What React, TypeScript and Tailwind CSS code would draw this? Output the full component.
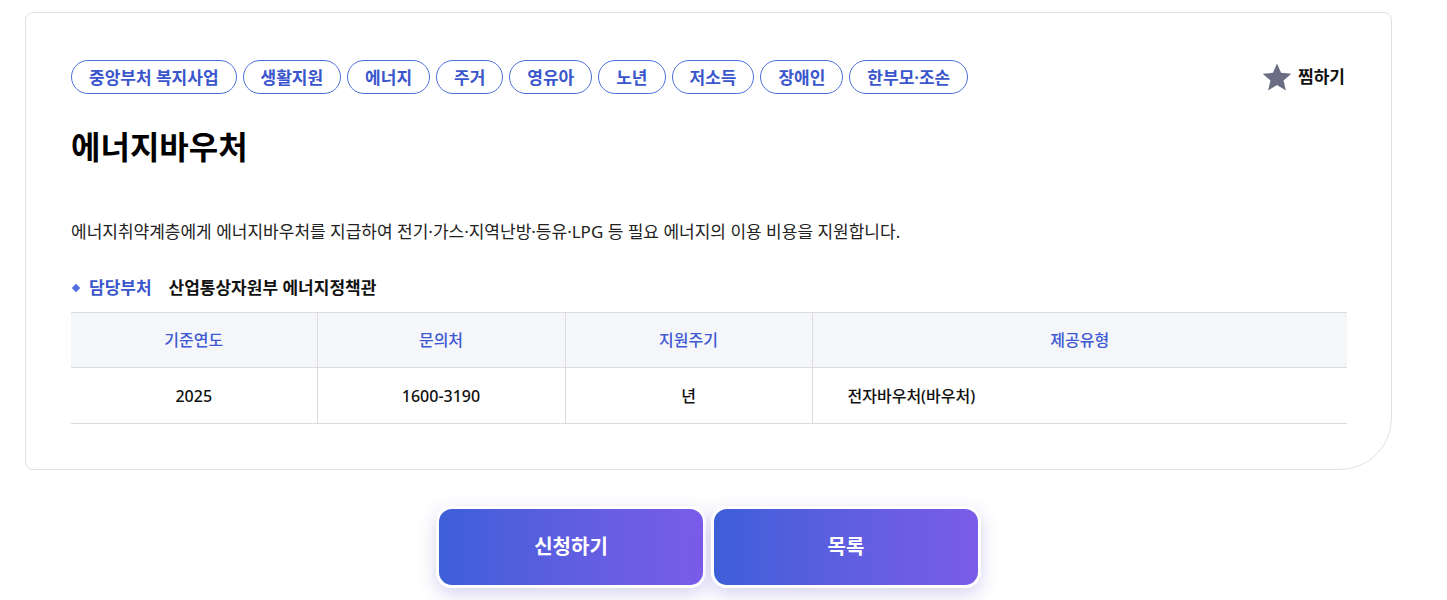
import React from 'react';

const tags = ['중앙부처 복지사업', '생활지원', '에너지', '주거', '영유아', '노년', '저소득', '장애인', '한부모·조손'];

const StarIcon = () => (
  <svg viewBox="0 0 24 24" className="w-[32px] h-[32px]" fill="#6b6d85">
    <path d="M12 1.8l3.05 7.1 7.7.62-5.85 5.05 1.8 7.53L12 18.05 5.3 22.1l1.8-7.53L1.25 9.52l7.7-.62z" />
  </svg>
);

export default function App() {
  return (
    <div
      className="w-full min-h-[600px] bg-white pt-[12px] pl-[25px] pr-[55px] text-[#111]"
      style={{ fontFamily: '"Noto Sans", "Noto Sans CJK KR", sans-serif' }}
    >
      {/* card */}
      <div className="border border-[#e1e1e1] rounded-[8px] rounded-br-[52px] pt-[47px] pl-[45px] pr-[44px] pb-[45px]">
        <div className="flex items-center justify-between">
          <div className="flex items-center gap-[6px]">
            {tags.map((t) => (
              <span
                key={t}
                className="h-[34px] px-[17px] flex items-center rounded-full border border-[#4f6fdc] text-[#3a56cc] text-[17px] font-semibold leading-none"
              >
                {t}
              </span>
            ))}
          </div>
          <button className="flex items-center gap-[5px] text-[17px] font-bold mr-[2px]">
            <StarIcon />
            찜하기
          </button>
        </div>

        <h1 className="mt-[31px] text-[32px] font-bold leading-[44px] text-black">에너지바우처</h1>

        <p className="mt-[50px] text-[17px] leading-[26px] text-[#222]">
          에너지취약계층에게 에너지바우처를 지급하여 전기·가스·지역난방·등유·LPG 등 필요 에너지의 이용 비용을 지원합니다.
        </p>

        <div className="mt-[30px] flex items-center text-[17px] font-bold leading-[26px]">
          <span className="w-[6px] h-[6px] bg-[#4f6fdc] rotate-45 ml-[2px] mr-[10px]" />
          <span className="text-[#3a56cc]">담당부처</span>
          <span className="ml-[17px] text-[#111]">산업통상자원부 에너지정책관</span>
        </div>

        <table className="mt-[11px] w-full border-collapse table-fixed text-[16px]">
          <thead>
            <tr className="bg-[#f5f6fa] h-[55px] border-y border-[#dcdcdc]">
              <th className="w-[246px] font-medium text-[#3f59d4] border-r border-[#dcdcdc]">기준연도</th>
              <th className="w-[248px] font-medium text-[#3f59d4] border-r border-[#dcdcdc]">문의처</th>
              <th className="w-[247px] font-medium text-[#3f59d4] border-r border-[#dcdcdc]">지원주기</th>
              <th className="font-medium text-[#3f59d4]">제공유형</th>
            </tr>
          </thead>
          <tbody>
            <tr className="h-[56px] border-b border-[#dcdcdc]">
              <td className="text-center font-medium border-r border-[#dcdcdc]">2025</td>
              <td className="text-center font-medium border-r border-[#dcdcdc]">1600-3190</td>
              <td className="text-center font-medium border-r border-[#dcdcdc]">년</td>
              <td className="pl-[35px] font-medium">전자바우처(바우처)</td>
            </tr>
          </tbody>
        </table>
      </div>

      {/* buttons */}
      <div className="mt-[36px] flex justify-center gap-[5px]">
        <button className="w-[270px] h-[82px] rounded-[16px] border-[3px] border-white bg-gradient-to-r from-[#3d5fd8] to-[#7a5ce9] text-white text-[20px] font-bold shadow-[0_6px_18px_rgba(90,80,200,0.25)]">
          신청하기
        </button>
        <button className="w-[270px] h-[82px] rounded-[16px] border-[3px] border-white bg-gradient-to-r from-[#3d5fd8] to-[#7a5ce9] text-white text-[20px] font-bold shadow-[0_6px_18px_rgba(90,80,200,0.25)]">
          목록
        </button>
      </div>
    </div>
  );
}
